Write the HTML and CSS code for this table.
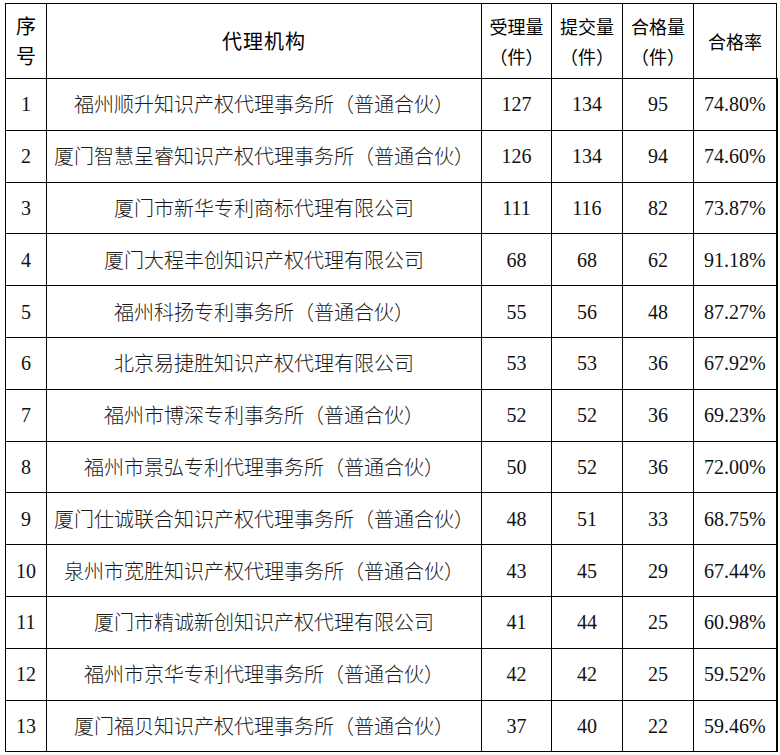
FILE: index.html
```html
<!DOCTYPE html>
<html lang="zh-CN">
<head>
<meta charset="utf-8">
<link rel="stylesheet" href="styles.css">
</head>
<body>
<table class="tbl">
<colgroup>
<col class="c-no"><col class="c-name"><col class="c-n1"><col class="c-n2"><col class="c-n3"><col class="c-rate">
</colgroup>
<thead>
<tr class="head">
<th class="h-no">序<br>号</th>
<th class="h-name">代理机构</th>
<th>受理量<br>（件）</th>
<th>提交量<br>（件）</th>
<th>合格量<br>（件）</th>
<th>合格率</th>
</tr>
</thead>
<tbody>
<tr><td>1</td><td>福州顺升知识产权代理事务所（普通合伙）</td><td>127</td><td>134</td><td>95</td><td>74.80%</td></tr>
<tr><td>2</td><td>厦门智慧呈睿知识产权代理事务所（普通合伙）</td><td>126</td><td>134</td><td>94</td><td>74.60%</td></tr>
<tr><td>3</td><td>厦门市新华专利商标代理有限公司</td><td>111</td><td>116</td><td>82</td><td>73.87%</td></tr>
<tr><td>4</td><td>厦门大程丰创知识产权代理有限公司</td><td>68</td><td>68</td><td>62</td><td>91.18%</td></tr>
<tr><td>5</td><td>福州科扬专利事务所（普通合伙）</td><td>55</td><td>56</td><td>48</td><td>87.27%</td></tr>
<tr><td>6</td><td>北京易捷胜知识产权代理有限公司</td><td>53</td><td>53</td><td>36</td><td>67.92%</td></tr>
<tr><td>7</td><td>福州市博深专利事务所（普通合伙）</td><td>52</td><td>52</td><td>36</td><td>69.23%</td></tr>
<tr><td>8</td><td>福州市景弘专利代理事务所（普通合伙）</td><td>50</td><td>52</td><td>36</td><td>72.00%</td></tr>
<tr><td>9</td><td>厦门仕诚联合知识产权代理事务所（普通合伙）</td><td>48</td><td>51</td><td>33</td><td>68.75%</td></tr>
<tr><td>10</td><td>泉州市宽胜知识产权代理事务所（普通合伙）</td><td>43</td><td>45</td><td>29</td><td>67.44%</td></tr>
<tr><td>11</td><td>厦门市精诚新创知识产权代理有限公司</td><td>41</td><td>44</td><td>25</td><td>60.98%</td></tr>
<tr><td>12</td><td>福州市京华专利代理事务所（普通合伙）</td><td>42</td><td>42</td><td>25</td><td>59.52%</td></tr>
<tr><td>13</td><td>厦门福贝知识产权代理事务所（普通合伙）</td><td>37</td><td>40</td><td>22</td><td>59.46%</td></tr>
</tbody>
</table>
</body>
</html>
```
FILE: styles.css
```css
html, body {
  margin: 0;
  padding: 0;
  background: #ffffff;
}
body {
  padding: 3px 0 0 5px;
}
.tbl {
  border-collapse: collapse;
  table-layout: fixed;
  width: 771px;
  color: #111;
}
.c-no { width: 41px; }
.c-name { width: 435px; }
.c-n1 { width: 70px; }
.c-n2 { width: 71px; }
.c-n3 { width: 71px; }
.c-rate { width: 83px; }
.tbl th, .tbl td {
  border: 1px solid #000;
  padding: 0;
  text-align: center;
  vertical-align: middle;
  white-space: nowrap;
}
.tbl th {
  font-family: "Noto Sans CJK SC", sans-serif;
  font-weight: 400;
  font-size: 18px;
  line-height: 30px;
  color: #000;
}
.tbl th.h-no {
  font-size: 20px;
}
.tbl th.h-name {
  font-size: 20px;
  letter-spacing: 1px;
}
.head {
  height: 75px;
}
.tbl td {
  font-family: "Liberation Serif", "Noto Sans CJK SC", serif;
  font-size: 20px;
  font-weight: 400;
  height: 50.8px;
  line-height: 24px;
}
.tbl td:nth-child(2) {
  font-family: "Noto Sans CJK SC", sans-serif;
  font-weight: 300;
  color: #1a1a1a;
}
.tbl td:last-child {
  border-right-width: 2px;
}
```
